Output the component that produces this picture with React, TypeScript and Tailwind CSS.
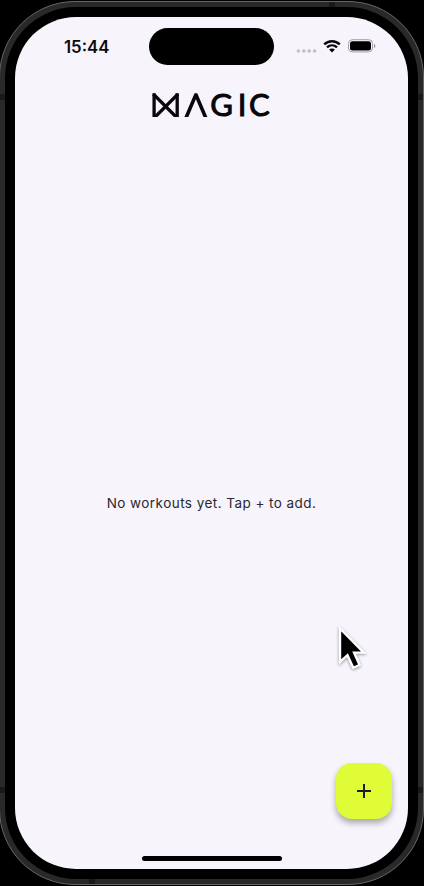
function Logo() {
  return (
    <svg width="121" height="44" viewBox="151 83 121 44" fill="none" role="img" aria-label="Magic">
      <clipPath id="mark">
        <rect x="151" y="93.2" width="60" height="23.8" />
      </clipPath>
      <g clipPath="url(#mark)" stroke="#08070b">
        <path d="M154.1 93V117M177.2 93V117" strokeWidth="3.3" />
        <path d="M153.3 94L176.4 117.2M178 94L154.9 117.2" strokeWidth="3.3" />
        <path d="M185.5 119L195.9 94.6L206.3 119" strokeWidth="3.6" />
      </g>
      <g fill="#08070b" stroke="#08070b" strokeWidth="1" fontFamily="Lato, sans-serif" fontSize="31">
        <text x="210.3" y="116.4">G</text>
        <text x="237.8" y="116.4">I</text>
        <text x="249" y="116.4">C</text>
      </g>
    </svg>
  );
}

function StatusBar() {
  return (
    <header className="flex h-[59px] items-start pl-[49px] pt-[11px]">
      <span className="mt-[7px] w-[85px] shrink-0 font-['Inter'] text-[16.8px] font-semibold leading-6 text-[#0b0a0d]">15:44</span>
      <div className="h-[37px] w-[125px] shrink-0 rounded-full bg-black" />
      <div className="ml-[22px] mt-[11px] flex items-center">
        <svg className="mt-[9px] shrink-0" width="21" height="4" viewBox="0 0 21 4" fill="#c1bec6">
          {[2.4, 7.8, 13.2, 18.6].map((x) => (
            <circle key={x} cx={x} cy="2" r="1.8" />
          ))}
        </svg>
        <svg className="ml-[6px] shrink-0" width="18" height="14" viewBox="0 0 18 14" fill="none" stroke="#08070b" strokeWidth="2.4">
          <path d="M1.2 5.4C5.6 1.1 12.4 1.1 16.8 5.4" />
          <path d="M4 8.4C6.9 5.7 11.1 5.7 14 8.4" />
          <path d="M6.1 10.5C7.8 9 10.2 9 11.9 10.5L9 13.5Z" fill="#08070b" stroke="none" />
        </svg>
        <svg className="ml-[7px] shrink-0" width="28" height="14" viewBox="0 0 28 14">
          <rect x="0.5" y="0.7" width="24" height="12.2" rx="3.8" fill="none" stroke="#a29fa8" />
          <rect x="2" y="2.2" width="21" height="9.2" rx="2.5" fill="#000" />
          <path d="M26 5V9C27.8 8.3 27.8 5.7 26 5Z" fill="#8d8a92" />
        </svg>
      </div>
    </header>
  );
}

function Pointer() {
  return (
    <svg className="absolute left-[333px] top-[622px] drop-shadow-[0_1px_1.5px_rgba(0,0,0,0.4)]" width="36" height="52" viewBox="333 622 36 52">
      <path d="M340 628.5V662L347.5 655.2L353.2 667.8L359.6 665L354.1 652.6H363.8Z" fill="#000" stroke="#fff" strokeWidth="2.4" />
    </svg>
  );
}

export default function App() {
  return (
    <div className="relative h-[886px] w-[424px] overflow-hidden bg-black pt-px">
      <div className="-ml-px h-[884px] w-[425px] rounded-[76px] border border-[#666] bg-[#292929]">
        <div className="h-full w-full rounded-[75px] p-[5px]">
          <div className="h-full w-[413px] rounded-[71px] bg-black px-2.5 py-2.5">
            <main className="flex h-[852px] w-[393px] flex-col overflow-hidden rounded-[61px] bg-[#f7f4fc]">
              <StatusBar />
              <div className="flex h-14 items-center justify-center pt-0.5">
                <Logo />
              </div>
              <div className="flex grow justify-center pt-[361px]">
                <p className="whitespace-nowrap font-['Inter'] text-[13.5px] leading-5 tracking-[0.45px] text-[#2a282f]">No workouts yet. Tap + to add.</p>
              </div>
              <footer className="flex h-[122px] flex-col items-end px-4 pt-4">
                <button aria-label="Add workout" className="flex size-14 items-center justify-center rounded-2xl bg-[#dffc37] shadow-[0_4px_6px_rgba(0,0,0,0.32)]">
                  <svg width="14" height="14" viewBox="0 0 14 14" stroke="#201d29" strokeWidth="2">
                    <path d="M7 0V14M0 7H14" />
                  </svg>
                </button>
                <div className="mt-[37px] h-[5px] w-[140px] self-center rounded-full bg-black" />
              </footer>
            </main>
          </div>
        </div>
      </div>
      <i className="absolute left-0 top-[94px] h-1.5 w-[5px] bg-[#1b1918]" />
      <i className="absolute left-0 top-[787px] h-1.5 w-[5px] bg-[#1b1918]" />
      <i className="absolute left-[418px] top-[94px] h-1.5 w-[5px] bg-[#1b1918]" />
      <i className="absolute left-[418px] top-[787px] h-1.5 w-[5px] bg-[#1b1918]" />
      <i className="absolute left-[329px] top-0.5 h-[5px] w-1.5 bg-[#1b1918]" />
      <i className="absolute left-[89px] top-[879px] h-[5px] w-1.5 bg-[#1b1918]" />
      <Pointer />
    </div>
  );
}
